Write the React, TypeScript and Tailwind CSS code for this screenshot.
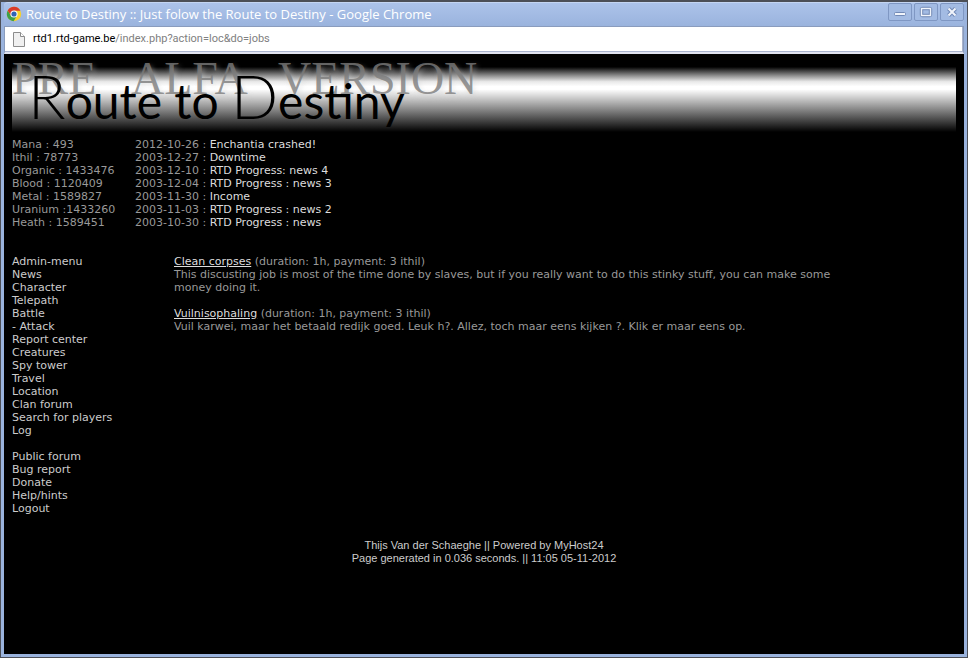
import React from "react";

const stats = [
  "Mana : 493",
  "Ithil : 78773",
  "Organic : 1433476",
  "Blood : 1120409",
  "Metal : 1589827",
  "Uranium :1433260",
  "Heath : 1589451",
];

const news = [
  ["2012-10-26", "Enchantia crashed!"],
  ["2003-12-27", "Downtime"],
  ["2003-12-10", "RTD Progress: news 4"],
  ["2003-12-04", "RTD Progress : news 3"],
  ["2003-11-30", "Income"],
  ["2003-11-03", "RTD Progress : news 2"],
  ["2003-10-30", "RTD Progress : news"],
];

const menu = [
  "Admin-menu",
  "News",
  "Character",
  "Telepath",
  "Battle",
  "- Attack",
  "Report center",
  "Creatures",
  "Spy tower",
  "Travel",
  "Location",
  "Clan forum",
  "Search for players",
  "Log",
];

const extras = ["Public forum", "Bug report", "Donate", "Help/hints", "Logout"];

const jobs = [
  {
    name: "Clean corpses",
    terms: "(duration: 1h, payment: 3 ithil)",
    text: "This discusting job is most of the time done by slaves, but if you really want to do this stinky stuff, you can make some money doing it.",
  },
  {
    name: "Vuilnisophaling",
    terms: "(duration: 1h, payment: 3 ithil)",
    text: "Vuil karwei, maar het betaald redijk goed. Leuk h?. Allez, toch maar eens kijken ?. Klik er maar eens op.",
  },
];

function ChromeLogo() {
  return (
    <svg viewBox="0 0 16 16" className="h-4 w-4 shrink-0" aria-hidden="true">
      <circle cx="8" cy="8" r="7.2" fill="#f7d02c" />
      <path d="M8 8 L5 9.8 L1.76 4.4 A7.2 7.2 0 0 0 7.6 15.2 L11.1 9.6Z" fill="#3f9f48" />
      <path d="M8 8 L5 9.6 L1.76 4.4 A7.2 7.2 0 0 1 14.4 4.7 L8 4.7Z" fill="#d93a2b" />
      <circle cx="8" cy="8" r="3.6" fill="#fff" />
      <circle cx="8" cy="8" r="2.6" fill="#2f62b4" />
    </svg>
  );
}

function PageIcon() {
  return (
    <svg viewBox="0 0 12 15" className="h-[15px] w-3 shrink-0" aria-hidden="true">
      <path d="M.5 .5 H7.5 L11.5 4.5 V14.5 H.5Z" fill="#f0f0f0" stroke="#8c8c8c" />
      <path d="M7.5 .5 V4.5 H11.5" fill="#fff" stroke="#8c8c8c" />
    </svg>
  );
}

function WindowButton({ label, children }: { label: string; children: React.ReactNode }) {
  return (
    <button
      aria-label={label}
      className="flex h-[18px] w-6 items-center justify-center rounded-xs border border-[#7f97c3] bg-[#a3bbe3]"
    >
      <svg viewBox="0 0 14 12" className="h-3 w-[14px] shrink-0" fill="none" aria-hidden="true">
        {children}
      </svg>
    </button>
  );
}

function TitleBar() {
  return (
    <header className="flex h-6 items-start justify-between rounded-t-sm border-t border-[#c4d5f2] bg-linear-to-b from-[#acc3ea] to-[#9ab3dd] pl-[2px]">
      <div className="flex items-center gap-1 pt-[3px]">
        <ChromeLogo />
        <h1 className="font-['Open_Sans','Noto_Sans',sans-serif] text-[13px] leading-4 whitespace-nowrap text-white">
          Route to Destiny :: Just folow the Route to Destiny - Google Chrome
        </h1>
      </div>
      <div className="flex gap-[2px]">
        <WindowButton label="Minimize">
          <rect x="1.5" y="6.5" width="11" height="3" rx="1" fill="#f0f4fb" stroke="#7189b6" />
        </WindowButton>
        <WindowButton label="Maximize">
          <rect x="2.5" y="2.5" width="9" height="7" stroke="#7189b6" strokeWidth="3.4" rx="1" />
          <rect x="2.5" y="2.5" width="9" height="7" stroke="#f0f4fb" strokeWidth="1.4" />
        </WindowButton>
        <WindowButton label="Close">
          <path d="M3.5 2.5 L10.5 9.5 M10.5 2.5 L3.5 9.5" stroke="#7189b6" strokeWidth="4" />
          <path d="M3.5 2.5 L10.5 9.5 M10.5 2.5 L3.5 9.5" stroke="#f0f4fb" strokeWidth="2" />
        </WindowButton>
      </div>
    </header>
  );
}

function AddressBar() {
  return (
    <div className="border border-b-2 border-[#8a9cbd] border-b-[#dfe2ee] bg-white">
      <div className="flex h-[25px] items-center gap-2 border-r border-b border-[#a9b3cc] pl-2">
        <PageIcon />
        <p className="font-['Roboto',sans-serif] text-[11px] leading-4 text-[#808080]">
          <span className="text-black">rtd1.rtd-game.be</span>/index.php?action=loc&amp;do=jobs
        </p>
      </div>
    </div>
  );
}

function Banner() {
  return (
    <div className="relative h-[70px]">
      <div className="h-full bg-[linear-gradient(to_bottom,#000_7%,#888_19%,#e8e8e8_28%,#fff_35%,#fff_39%,#000_100%)]" />
      <p className="absolute top-0 left-0 flex font-['Liberation_Serif',serif] text-[46px] leading-[34px] whitespace-pre text-[#7c7c7c]/80 [text-shadow:2px_3px_5px_#cccccc66]">
        <span className="w-[119px]">PRE </span>
        <span className="w-[147px]">ALFA </span>
        <span>VERSION</span>
      </p>
      <p className="absolute top-0 left-4 font-['Lato',sans-serif] text-[48px] leading-[66px] whitespace-pre text-black">
        <span className="text-[62px] font-light">R</span>oute to{" "}
        <span className="text-[62px] font-light">D</span>estiny
      </p>
    </div>
  );
}

function LinkList({ items }: { items: string[] }) {
  return (
    <ul>
      {items.map((item) => (
        <li key={item}>
          <a href="#">{item}</a>
        </li>
      ))}
    </ul>
  );
}

export default function App() {
  return (
    <div className="flex min-h-screen flex-col border border-t-2 border-[#4c4f57] bg-[#9ab3dd] px-[3px] pb-[3px]">
      <TitleBar />
      <AddressBar />
      <main className="grow bg-black px-2 pt-2 font-['DejaVu_Sans',Verdana,sans-serif] text-[11px] leading-[13px] text-[#999999]">
        <Banner />
        <div className="flex pt-[6px]">
          <ul className="w-[123px] shrink-0">
            {stats.map((s) => (
              <li key={s}>{s}</li>
            ))}
          </ul>
          <ul>
            {news.map(([date, title]) => (
              <li key={date}>
                {date} :{" "}
                <a href="#" className="text-[#dddddd]">
                  {title}
                </a>
              </li>
            ))}
          </ul>
        </div>
        <div className="flex pt-[26px]">
          <nav className="flex w-[162px] shrink-0 flex-col gap-[13px] text-[#cccccc]">
            <LinkList items={menu} />
            <LinkList items={extras} />
          </nav>
          <div className="mr-24 flex grow flex-col gap-[13px]">
            {jobs.map((job) => (
              <section key={job.name}>
                <a href="#" className="text-[#dddddd] underline">
                  {job.name}
                </a>{" "}
                {job.terms}
                <p>{job.text}</p>
              </section>
            ))}
          </div>
        </div>
        <footer className="pt-6 text-center font-['Liberation_Sans',Arial,sans-serif] text-[#cccccc]">
          <p>Thijs Van der Schaeghe || Powered by MyHost24</p>
          <p>Page generated in 0.036 seconds. || 11:05 05-11-2012</p>
        </footer>
      </main>
    </div>
  );
}
